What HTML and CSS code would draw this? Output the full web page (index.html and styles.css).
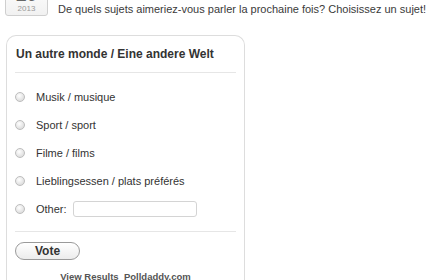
FILE: index.html
```html
<!DOCTYPE html>
<html lang="fr">
<head>
<meta charset="UTF-8">
<title>Sondage</title>
<link rel="stylesheet" href="styles.css">
</head>
<body>
<div class="postHead">
    <div class="dateBox">
        <span class="day">20</span>
        <span class="year">2013</span>
    </div>
    <p class="intro">De quels sujets aimeriez-vous parler la prochaine fois? Choisissez un sujet!</p>
</div>
<div class="poll">
    <div class="pollTitle">Un autre monde / Eine andere Welt</div>
    <ul class="answers">
        <li><span class="radio"></span><span>Musik / musique</span></li>
        <li><span class="radio"></span><span>Sport / sport</span></li>
        <li><span class="radio"></span><span>Filme / films</span></li>
        <li><span class="radio"></span><span>Lieblingsessen / plats préférés</span></li>
        <li><span class="radio"></span><span>Other:</span><span class="otherInput"></span></li>
    </ul>
    <div class="pollFoot">
        <button class="voteBtn">Vote</button>
    </div>
    <div class="links">View Results&nbsp;&nbsp;Polldaddy.com</div>
</div>
</body>
</html>
```
FILE: styles.css
```css
* {
    box-sizing: border-box;
}

body {
    margin: 0;
    background: #ffffff;
    font-family: "Liberation Sans", Arial, sans-serif;
    color: #333333;
}

.postHead {
    display: flex;
    align-items: flex-start;
    padding-left: 5px;
}

.dateBox {
    width: 43px;
    height: 32px;
    margin-top: -16px;
    border: 1px solid #cfcfcf;
    border-radius: 3px;
    background: linear-gradient(#ffffff, #f1f1f1);
    display: flex;
    flex-direction: column;
    align-items: center;
}

.day {
    font-size: 19px;
    font-weight: bold;
    color: #666666;
    line-height: 19px;
}

.year {
    font-size: 8px;
    color: #999999;
    line-height: 10px;
}

.intro {
    margin: 3px 0 0 10px;
    font-size: 11px;
    line-height: 13px;
    color: #3a3a3a;
}

.poll {
    width: 239px;
    margin: 19px 0 0 6px;
    border: 1px solid #dddddd;
    border-bottom: none;
    border-radius: 10px 10px 0 0;
    padding: 0 8px;
    height: 260px;
}

.pollTitle {
    font-size: 12px;
    font-weight: bold;
    color: #333333;
    padding: 11px 0 0 1px;
    height: 37px;
    border-bottom: 1px solid #e6e6e6;
}

.answers {
    list-style: none;
    margin: 0;
    padding: 10px 0 0 0;
    border-bottom: 1px solid #e6e6e6;
    height: 159px;
}

.answers li {
    display: flex;
    align-items: center;
    height: 28px;
    font-size: 11px;
    color: #333333;
}

.radio {
    width: 10px;
    height: 10px;
    border-radius: 50%;
    border: 1px solid #bdbdbd;
    background: radial-gradient(circle at 40% 35%, #ffffff, #d2d2d2);
    margin: 0 11px 0 0;
}

.otherInput {
    width: 124px;
    height: 16px;
    margin-left: 6px;
    border: 1px solid #d4d4d4;
    border-radius: 3px;
}

.pollFoot {
    padding-top: 9px;
}

.voteBtn {
    width: 65px;
    height: 18px;
    border: 1px solid #9a9a9a;
    border-radius: 9px;
    background: linear-gradient(#ffffff, #ececec);
    font-family: "Liberation Sans", Arial, sans-serif;
    font-size: 12px;
    font-weight: bold;
    color: #333333;
    padding: 0;
}

.links {
    text-align: center;
    font-size: 9.5px;
    font-weight: bold;
    color: #555555;
    padding-top: 11px;
}
```
